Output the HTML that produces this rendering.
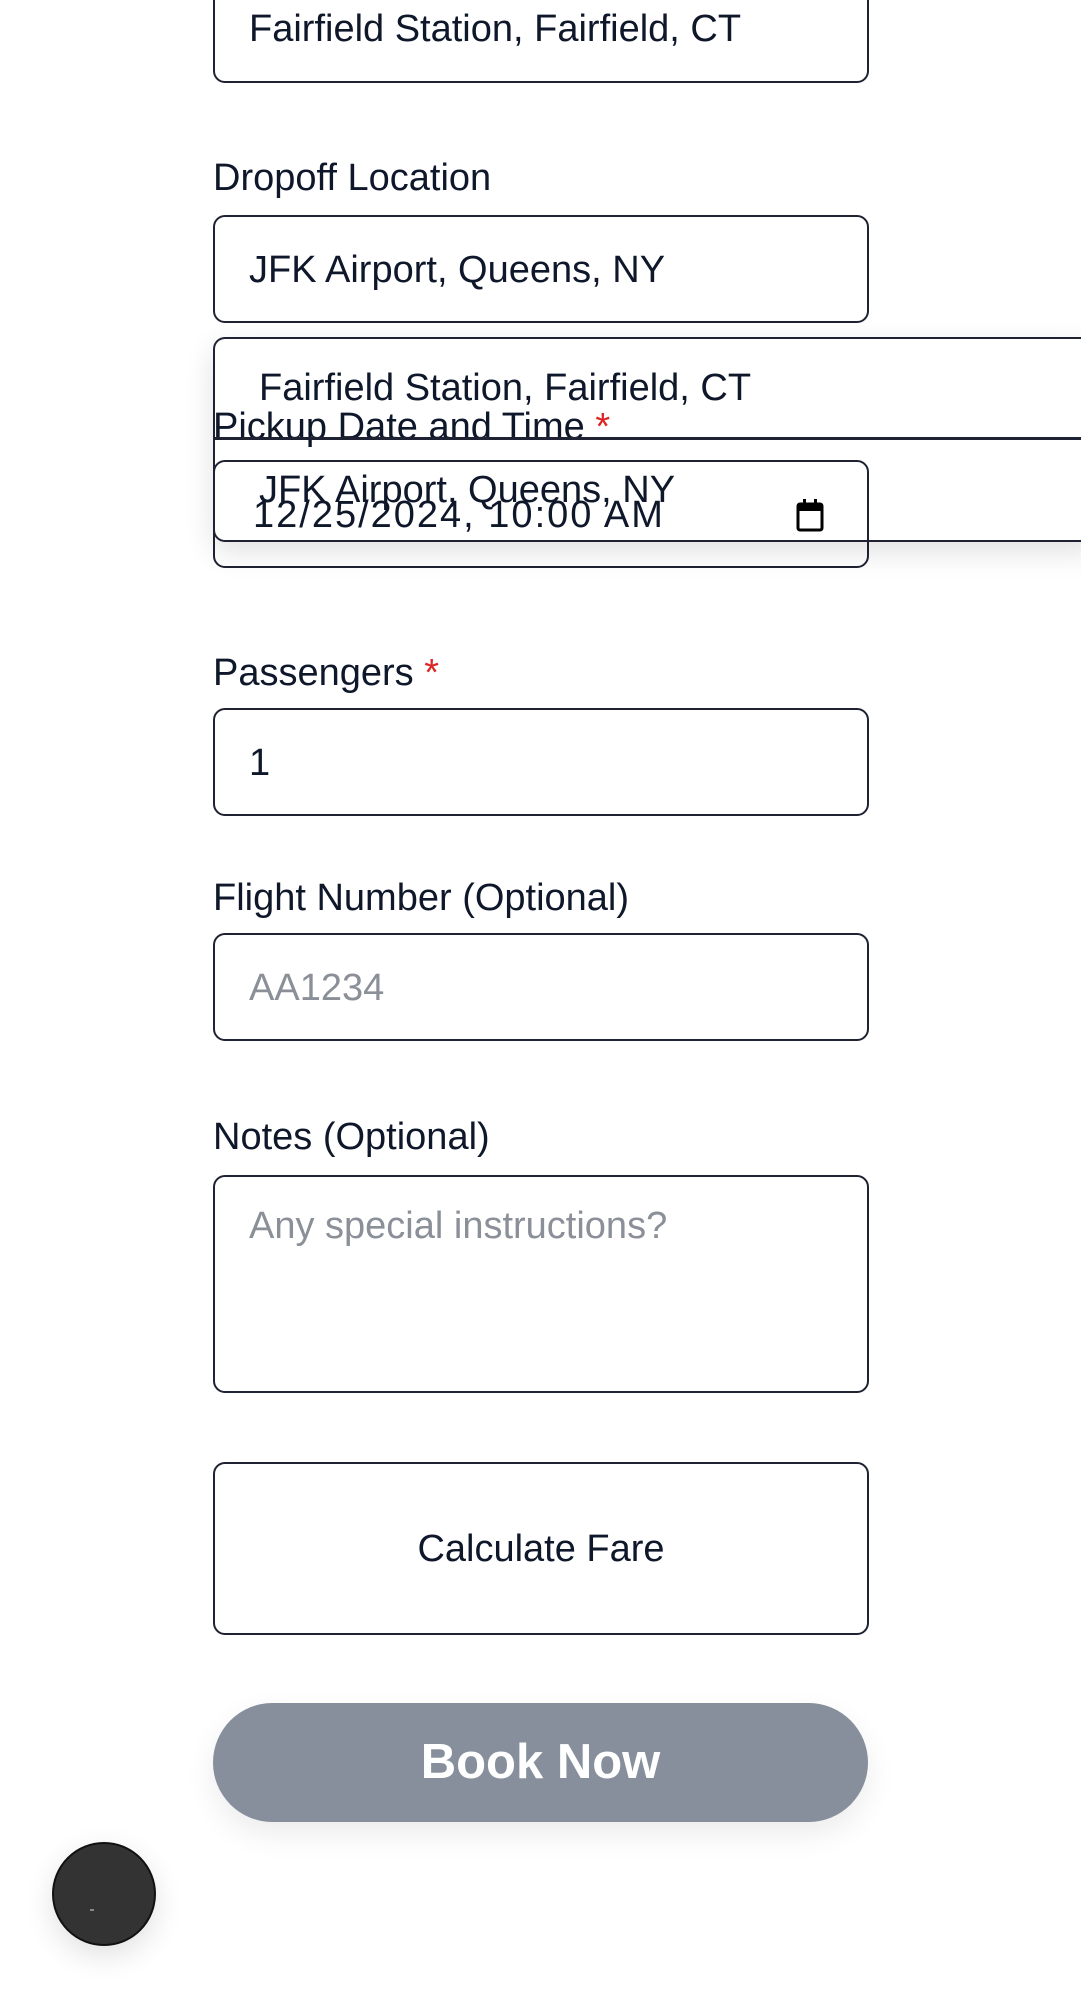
<!DOCTYPE html>
<html><head><meta charset="utf-8"><style>
html,body{margin:0;padding:0;width:1081px;height:1999px;background:#fff;overflow:hidden;font-family:"Liberation Sans",sans-serif;color:#0f172a;}
.a{position:absolute;}
.box{position:absolute;left:213px;width:652px;border:2px solid #1e2233;border-radius:12px;background:#fff;}
.lbl{position:absolute;left:213px;font-size:38px;line-height:44px;}
.t{position:absolute;left:34px;font-size:38px;line-height:44px;white-space:nowrap;}
.req{color:#dc2626;}
.ph{color:#8a8f98;}
</style></head><body>
<div class="box" style="top:-20px;height:99px"><div class="t" style="top:25px">Fairfield Station, Fairfield, CT</div></div>
<div class="lbl" style="top:156px">Dropoff Location</div>
<div class="box" style="top:215px;height:104px"><div class="t" style="top:31px">JFK Airport, Queens, NY</div></div>
<div class="lbl" style="top:405px">Pickup Date and Time <span class="req">*</span></div>
<div class="box" style="top:460px;height:104px;background:transparent"><div class="t" style="top:31px;left:38px;letter-spacing:2px">12/25/2024, 10:00 AM</div>
<svg class="a" style="left:580px;top:36px" width="30" height="34" viewBox="0 0 30 34"><rect x="3" y="6" width="24" height="26" rx="2" fill="none" stroke="#000" stroke-width="3"/><rect x="3" y="6" width="24" height="7" fill="#000"/><rect x="8" y="1" width="3" height="7" fill="#000"/><rect x="19" y="1" width="3" height="7" fill="#000"/></svg></div>
<div class="a" style="left:213px;top:337px;width:880px;height:201px;border:2px solid #1e2233;border-right:none;border-radius:12px 0 0 12px;box-shadow:0 10px 30px rgba(0,0,0,0.12);background:transparent"></div>
<div class="a" style="left:213px;top:437px;width:880px;height:3px;background:#1e2233"></div>
<div class="a" style="left:259px;top:366px;font-size:38px;line-height:44px;white-space:nowrap">Fairfield Station, Fairfield, CT</div>
<div class="a" style="left:259px;top:468px;font-size:38px;line-height:44px;white-space:nowrap">JFK Airport, Queens, NY</div>
<div class="lbl" style="top:651px">Passengers <span class="req">*</span></div>
<div class="box" style="top:708px;height:104px"><div class="t" style="top:31px">1</div></div>
<div class="lbl" style="top:876px">Flight Number (Optional)</div>
<div class="box" style="top:933px;height:104px"><div class="t ph" style="top:31px">AA1234</div></div>
<div class="lbl" style="top:1115px">Notes (Optional)</div>
<div class="box" style="top:1175px;height:214px"><div class="t ph" style="top:27px">Any special instructions?</div></div>
<div class="box" style="top:1462px;height:169px;text-align:center;font-size:38px;line-height:171px">Calculate Fare</div>
<div class="a" style="left:213px;top:1703px;width:655px;height:119px;border-radius:60px;background:#868f9b;color:#fff;font-weight:bold;font-size:49px;line-height:119px;text-align:center;box-shadow:0 12px 30px rgba(0,0,0,0.08)">Book Now</div>
<div class="a" style="left:52px;top:1842px;width:100px;height:100px;border-radius:50%;background:#333;border:2px solid #111;box-shadow:0 10px 30px rgba(0,0,0,0.12)"><div class="a" style="left:36px;top:65px;width:4px;height:2px;background:#888"></div></div>
</body></html>
